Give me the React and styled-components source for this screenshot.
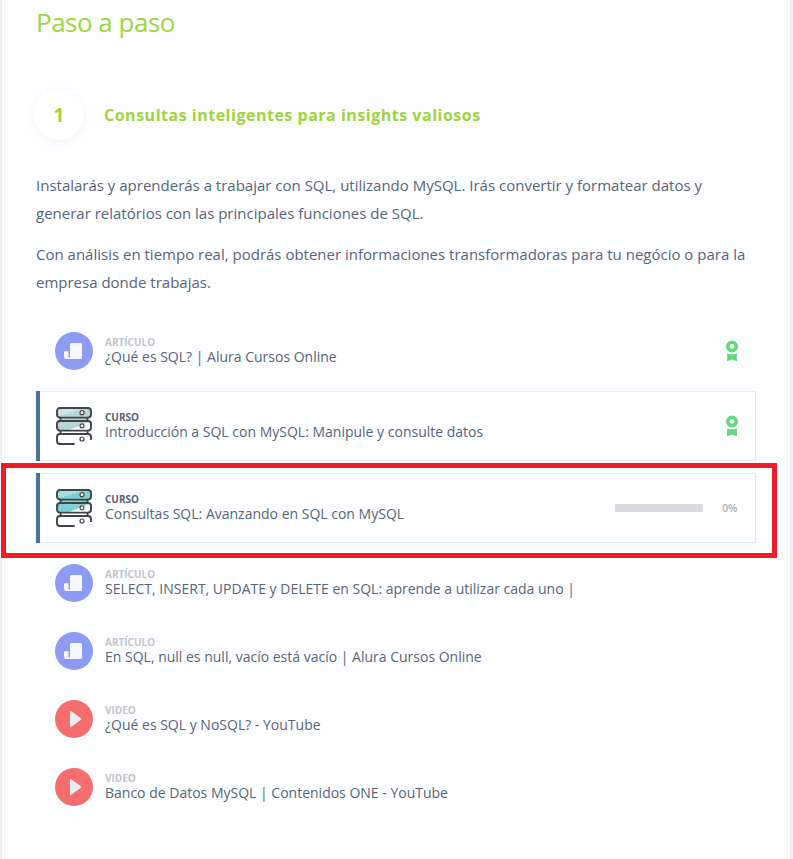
import React from "react";
import styled, { createGlobalStyle } from "styled-components";

const GlobalStyle = createGlobalStyle`
  * { box-sizing: border-box; }
  body {
    margin: 0;
    background: #f2f3fa;
    font-family: "Open Sans", sans-serif;
    color: #57657b;
  }
`;

const Panel = styled.main`
  width: 790px;
  height: 859px;
  margin-left: 1px;
  padding: 2px 34px 0;
  background: #fdfeff;
  border: solid #ebebf5;
  border-width: 0 1px;
`;

const Title = styled.h1`
  margin: 0;
  font-size: 26px;
  font-weight: 400;
  line-height: 40px;
  letter-spacing: -0.5px;
  color: #9fd545;
`;

const StepHeader = styled.header`
  display: flex;
  align-items: center;
  gap: 20px;
  height: 50px;
  margin: 48px 0 31px -2px;
`;

const StepNumber = styled.span`
  display: grid;
  place-items: center;
  width: 50px;
  height: 50px;
  border-radius: 50%;
  background: #fff;
  box-shadow: 0 2px 10px rgba(60, 70, 110, 0.06);
  font-size: 19px;
  font-weight: 700;
  color: #9fd43c;
`;

const StepTitle = styled.h2`
  margin: 0;
  font-size: 16px;
  font-weight: 700;
  line-height: 24px;
  letter-spacing: 0.51px;
  white-space: nowrap;
  color: #9fd43c;
`;

const Paragraph = styled.p`
  margin: 0 0 13px;
  font-size: 15px;
  line-height: 28px;
  white-space: nowrap;
`;

const List = styled.ul`
  display: flex;
  flex-direction: column;
  width: 720px;
  margin: 21px 0 0;
  padding: 0;
  list-style: none;
`;

const Item = styled.li`
  position: relative;
  display: flex;
  align-items: center;
  height: 68px;
  padding: 0 18px 0 19px;
`;

const CourseItem = styled(Item)`
  height: 70px;
  margin: 6px 0;
  padding: 0 17px 0 18px;
  border: 1px solid #e8eaf3;
  box-shadow: 0 1px 3px rgba(80, 90, 130, 0.05);

  &::before {
    content: "";
    position: absolute;
    top: -1px;
    bottom: -1px;
    left: -1px;
    width: 4px;
    background: #4c719d;
  }
`;

const Texts = styled.div`
  flex: 1;
  margin: 0 0 0 12px;
  padding-bottom: 1px;
  white-space: nowrap;
`;

const Kind = styled.div`
  height: 13px;
  font-size: 10px;
  font-weight: 700;
  line-height: 13px;
  text-transform: uppercase;
  color: ${(p) => (p.$strong ? "#57617b" : "#c2c4ce")};
`;

const Name = styled.div`
  font-size: 14px;
  line-height: 16px;
`;

const Progress = styled.div`
  width: 88px;
  height: 8px;
  margin-right: 19px;
  background: #d7dae0;
`;

const Percent = styled.span`
  width: 16px;
  font-size: 11px;
  font-weight: 600;
  line-height: 16px;
  letter-spacing: -0.2px;
  white-space: nowrap;
  color: #a9b0bd;
`;

const Highlight = styled.div`
  position: absolute;
  top: -11px;
  left: -36px;
  width: 776px;
  height: 95px;
  border: 5px solid #ee1c24;
  pointer-events: none;
`;

const Icon = styled.svg`
  display: block;
  flex: none;
`;

const ArticleIcon = () => (
  <Icon width="38" height="38" viewBox="0 0 38 38">
    <circle cx="19" cy="19" r="19" fill="#8d9bf3" />
    <path
      d="M16.300 11h9.200A1.500 1.500 0 0 1 27 12.500V25.500a1.500 1.500 0 0 1-1.500 1.500H11.300A2.300 2.300 0 0 1 9 24.700V19.300h4.500v5.700a.75.75 0 0 0 1.500 0V12.500A1.500 1.500 0 0 1 16.300 11z"
      fill="#f7f8fd"
    />
  </Icon>
);

const VideoIcon = () => (
  <Icon width="38" height="38" viewBox="0 0 38 38">
    <circle cx="19" cy="19" r="19" fill="#f66d6d" />
    <path d="M15 11.500q0-1 .9-.4L26 18.300q.8.700 0 1.400L15.900 26.900q-.9.600-.9-.4z" fill="#eceff1" />
  </Icon>
);

const ServerIcon = ({ light, dark }) => (
  <Icon width="38" height="38" viewBox="0 0 38 38">
    <rect x="2.200" y="1" width="33.600" height="9.500" rx="3" fill={dark} />
    <path d="M3 9V4q0-3 3-3h23Q20 5 3 9z" fill={light} />
    <path d="M2.200 23.500v-6q0-3 3-3h30L13 23.500z" fill={dark} />
    <path d="M5 10.500h28v3.500H5z" fill={dark} />
    <g fill="none" stroke="#414446" strokeWidth="1.900">
      <rect x="2" y="1" width="34" height="9.600" rx="3" />
      <rect x="2" y="14" width="34" height="9.600" rx="3" />
      <path d="M5.500 10.500V14M32.500 10.500V14M5.500 23.600V27M32.500 23.600V27" />
      <path d="M19.700 37H5q-3 0-3-3v-4q0-3 3-3h28q3 0 3 3v3" />
    </g>
    <g fill="#fdfeff" stroke="#414446" strokeWidth="1.200">
      <circle cx="27" cy="5.700" r="2" />
      <circle cx="27" cy="18.800" r="2" />
      <circle cx="27" cy="32" r="2" />
    </g>
  </Icon>
);

const MedalIcon = () => (
  <Icon width="12" height="22" viewBox="0 0 12 22">
    <circle cx="6" cy="6.400" r="4.200" fill="none" stroke="#5fda7c" strokeWidth="3.600" />
    <path d="M1 13.400q5 1.800 10 0-.4 4 0 7.800L6 19.500 1 21.200q.4-3.900 0-7.800z" fill="#5fda7c" />
  </Icon>
);

const courseColors = {
  done: { light: "#d0e4e5", dark: "#b8d5d8" },
  current: { light: "#a9dfe2", dark: "#7fcfd4" },
};

const items = [
  { kind: "Artículo", name: "¿Qué es SQL? | Alura Cursos Online", done: true },
  { kind: "Curso", name: "Introducción a SQL con MySQL: Manipule y consulte datos", done: true },
  { kind: "Curso", name: "Consultas SQL: Avanzando en SQL con MySQL", progress: 0 },
  { kind: "Artículo", name: "SELECT, INSERT, UPDATE y DELETE en SQL: aprende a utilizar cada uno |" },
  { kind: "Artículo", name: "En SQL, null es null, vacío está vacío | Alura Cursos Online" },
  { kind: "Video", name: "¿Qué es SQL y NoSQL? - YouTube" },
  { kind: "Video", name: "Banco de Datos MySQL | Contenidos ONE - YouTube" },
];

function ContentItem({ item }) {
  const isCourse = item.kind === "Curso";
  const Row = isCourse ? CourseItem : Item;
  const hasProgress = item.progress !== undefined;
  return (
    <Row>
      {item.kind === "Artículo" && <ArticleIcon />}
      {item.kind === "Video" && <VideoIcon />}
      {isCourse && <ServerIcon {...courseColors[item.done ? "done" : "current"]} />}
      <Texts>
        <Kind $strong={isCourse}>{item.kind}</Kind>
        <Name>{item.name}</Name>
      </Texts>
      {item.done && <MedalIcon />}
      {hasProgress && (
        <>
          <Progress />
          <Percent>{item.progress}%</Percent>
          <Highlight />
        </>
      )}
    </Row>
  );
}

export default function App() {
  return (
    <>
      <GlobalStyle />
      <Panel>
        <Title>Paso a paso</Title>
        <StepHeader>
          <StepNumber>1</StepNumber>
          <StepTitle>Consultas inteligentes para insights valiosos</StepTitle>
        </StepHeader>
        <Paragraph>
          Instalarás y aprenderás a trabajar con SQL, utilizando MySQL. Irás convertir y formatear datos y
          <br />
          generar relatórios con las principales funciones de SQL.
        </Paragraph>
        <Paragraph>
          Con análisis en tiempo real, podrás obtener informaciones transformadoras para tu negócio o para la
          <br />
          empresa donde trabajas.
        </Paragraph>
        <List>
          {items.map((item) => (
            <ContentItem key={item.name} item={item} />
          ))}
        </List>
      </Panel>
    </>
  );
}
